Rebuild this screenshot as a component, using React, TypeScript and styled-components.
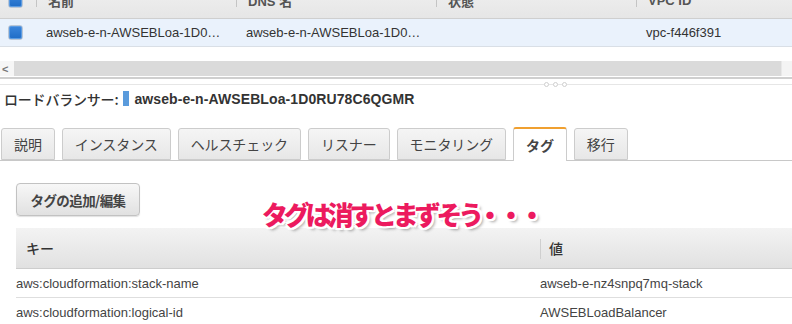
import React from "react";
import styled, { createGlobalStyle } from "styled-components";

const GlobalStyle = createGlobalStyle`
  html, body { margin: 0; padding: 0; background: #fff; }
  body {
    font-family: "Liberation Sans", Arial, "Noto Sans CJK JP", sans-serif;
    color: #444;
    overflow: hidden;
  }
`;

const Page = styled.div`
  position: relative;
  width: 792px;
  height: 324px;
  overflow: hidden;
  background: #fff;
`;

const ListArea = styled.div`
  display: flex;
  flex-direction: column;
`;

const HeadRow = styled.div`
  display: grid;
  grid-template-columns: 36px 200px 200px 200px 156px;
  height: 35px;
  margin-top: -17px;
  background: linear-gradient(#f1f1f1, #e6e6e6);
  border-bottom: 1px solid #cfcfcf;
`;

const HeadCell = styled.div<{ $sep?: boolean }>`
  position: relative;
  display: flex;
  align-items: center;
  padding-left: 12px;
  font-size: 13px;
  font-weight: bold;
  color: #555;
  &::before {
    content: "";
    display: ${(p) => (p.$sep ? "block" : "none")};
    position: absolute;
    left: 0;
    top: 10px;
    height: 14px;
    width: 1px;
    background: #c4c4c4;
  }
`;

const DataRow = styled.div`
  display: grid;
  grid-template-columns: 36px 200px 200px 200px 156px;
  height: 27px;
  background: #eaf2fc;
  border-bottom: 1px solid #d9dfe6;
`;

const DataCell = styled.div`
  display: flex;
  align-items: center;
  padding-left: 10px;
  font-size: 13px;
  color: #333;
  white-space: nowrap;
`;

const CheckCell = styled.div`
  display: flex;
  align-items: center;
  padding-left: 8px;
`;

const CheckBox = styled.span`
  display: block;
  width: 13px;
  height: 13px;
  border-radius: 3px;
  background: linear-gradient(#3b86dc, #1f6cc6);
  border: 1px solid #b9c6d6;
  box-shadow: inset 0 0 0 1px #5b9be2;
`;

const ScrollBar = styled.div`
  display: flex;
  align-items: stretch;
  height: 15px;
  margin-top: 14px;
  border-bottom: 2px solid #cfcfcf;
  padding-bottom: 1px;
`;

const ScrollArrow = styled.div`
  width: 14px;
  display: flex;
  align-items: center;
  justify-content: flex-start;
  padding-left: 2px;
  box-sizing: border-box;
  color: #777;
  font-size: 11px;
  font-weight: bold;
  background: #f6f6f6;
`;

const ScrollTrack = styled.div`
  flex: 1;
  background: #dadada;
  border-right: 1px solid #e8e8e8;
`;

const ScrollEnd = styled.div`
  width: 10px;
  background: #f4f4f4;
`;

const Splitter = styled.div`
  position: relative;
  height: 1px;
  margin-top: 5px;
  background: #e6e6e6;
`;

const SplitDots = styled.div`
  position: absolute;
  left: 544px;
  top: -2px;
  display: flex;
  gap: 4px;
  span {
    display: block;
    width: 3px;
    height: 3px;
    border-radius: 50%;
    border: 1px solid #cfcfcf;
    background: #fff;
  }
`;

const TitleBar = styled.div`
  display: flex;
  align-items: center;
  height: 17px;
  margin-top: 5px;
  padding-left: 4px;
  font-weight: bold;
  font-size: 14px;
  color: #333;
`;

const TitleLabel = styled.span`
  font-family: "Noto Sans CJK JP", sans-serif;
  font-weight: 500;
  font-size: 14px;
  letter-spacing: -0.2px;
`;

const TitleName = styled.span`
  letter-spacing: 0.1px;
`;

const BlueMark = styled.span`
  display: inline-block;
  width: 6px;
  height: 15px;
  margin: 0 5px 0 5px;
  background: #5a9bdc;
`;

const TabBar = styled.div`
  display: flex;
  align-items: flex-end;
  gap: 7px;
  height: 33px;
  margin-top: 20px;
  padding-left: 1px;
  border-bottom: 1px solid #c8c8c8;
`;

const Tab = styled.div<{ $active?: boolean }>`
  display: flex;
  align-items: center;
  justify-content: center;
  box-sizing: border-box;
  height: ${(p) => (p.$active ? "34px" : "32px")};
  padding: 0 12px;
  margin-bottom: ${(p) => (p.$active ? "-1px" : "0")};
  font-family: "Noto Sans CJK JP", sans-serif;
  font-size: 14px;
  letter-spacing: -0.1px;
  font-weight: ${(p) => (p.$active ? 700 : 400)};
  color: #444;
  background: ${(p) => (p.$active ? "#fff" : "linear-gradient(#f5f5f5, #e7e7e7)")};
  border: 1px solid #cccccc;
  border-top: ${(p) => (p.$active ? "2px solid #f0a030" : "1px solid #cccccc")};
  border-bottom: ${(p) => (p.$active ? "none" : "1px solid #cccccc")};
  border-radius: 3px 3px 0 0;
`;

const Content = styled.div`
  padding: 22px 0 0 16px;
  display: flex;
  flex-direction: column;
`;

const ActionButton = styled.button`
  align-self: flex-start;
  box-sizing: border-box;
  width: 124px;
  height: 33px;
  padding: 0;
  font-family: "Noto Sans CJK JP", sans-serif;
  font-weight: 700;
  font-size: 13.5px;
  letter-spacing: -0.6px;
  color: #444;
  background: linear-gradient(#f7f7f7, #e1e1e1);
  border: 1px solid #c2c2c2;
  border-radius: 4px;
  box-shadow: 0 1px 1px rgba(0, 0, 0, 0.12);
`;

const TagTable = styled.div`
  margin-top: 12px;
  display: flex;
  flex-direction: column;
`;

const TagHead = styled.div`
  display: grid;
  grid-template-columns: 524px 1fr;
  height: 40px;
  background: linear-gradient(#f3f3f3, #e1e1e1);
  border-bottom: 1px solid #cdcdcd;
`;

const TagHeadCell = styled.div<{ $sep?: boolean }>`
  position: relative;
  display: flex;
  align-items: center;
  padding-left: ${(p) => (p.$sep ? "9px" : "10px")};
  font-family: "Noto Sans CJK JP", sans-serif;
  font-size: 14px;
  font-weight: 500;
  color: #333;
  &::before {
    content: "";
    display: ${(p) => (p.$sep ? "block" : "none")};
    position: absolute;
    left: 0;
    top: 11px;
    width: 1px;
    height: 20px;
    background: #cfcfcf;
  }
`;

const TagRow = styled.div`
  display: grid;
  grid-template-columns: 524px 1fr;
  height: 28px;
  border-bottom: 1px solid #dedede;
`;

const TagCell = styled.div`
  display: flex;
  align-items: center;
  font-size: 13px;
  color: #444;
  white-space: nowrap;
`;

const Annotation = styled.div`
  position: absolute;
  left: 262px;
  top: 195px;
  font-family: "Noto Sans CJK JP", sans-serif;
  font-weight: 900;
  font-size: 26px;
  letter-spacing: -4.2px;
  color: #ec1a5e;
  white-space: nowrap;
  text-shadow:
    -2px 0 0 #fff, 2px 0 0 #fff, 0 -2px 0 #fff, 0 2px 0 #fff,
    -2px -2px 0 #fff, 2px 2px 0 #fff, -2px 2px 0 #fff, 2px -2px 0 #fff,
    3px 3px 3px rgba(0, 0, 0, 0.35);
`;

const Dots = styled.span`
  letter-spacing: -5px;
  margin-left: -3px;
`;

const headers = ["名前", "DNS 名", "状態", "VPC ID"];

const tags = [
  { key: "aws:cloudformation:stack-name", value: "awseb-e-nz4snpq7mq-stack" },
  { key: "aws:cloudformation:logical-id", value: "AWSEBLoadBalancer" },
];

const tabs = ["説明", "インスタンス", "ヘルスチェック", "リスナー", "モニタリング", "タグ", "移行"];

export default function App() {
  return (
    <Page>
      <GlobalStyle />
      <ListArea>
        <HeadRow>
          <CheckCell>
            <CheckBox />
          </CheckCell>
          {headers.map((h) => (
            <HeadCell key={h} $sep>
              {h}
            </HeadCell>
          ))}
        </HeadRow>
        <DataRow>
          <CheckCell>
            <CheckBox />
          </CheckCell>
          <DataCell>awseb-e-n-AWSEBLoa-1D0…</DataCell>
          <DataCell>awseb-e-n-AWSEBLoa-1D0…</DataCell>
          <DataCell />
          <DataCell>vpc-f446f391</DataCell>
        </DataRow>
        <ScrollBar>
          <ScrollArrow>&lt;</ScrollArrow>
          <ScrollTrack />
          <ScrollEnd />
        </ScrollBar>
        <Splitter>
          <SplitDots>
            <span />
            <span />
            <span />
          </SplitDots>
        </Splitter>
      </ListArea>

      <TitleBar>
        <TitleLabel>ロードバランサー:</TitleLabel>
        <BlueMark />
        <TitleName>awseb-e-n-AWSEBLoa-1D0RU78C6QGMR</TitleName>
      </TitleBar>

      <TabBar>
        {tabs.map((t) => (
          <Tab key={t} $active={t === "タグ"}>
            {t}
          </Tab>
        ))}
      </TabBar>

      <Content>
        <ActionButton>タグの追加/編集</ActionButton>
        <TagTable>
          <TagHead>
            <TagHeadCell>キー</TagHeadCell>
            <TagHeadCell $sep>値</TagHeadCell>
          </TagHead>
          {tags.map((t) => (
            <TagRow key={t.key}>
              <TagCell>{t.key}</TagCell>
              <TagCell>{t.value}</TagCell>
            </TagRow>
          ))}
        </TagTable>
      </Content>

      <Annotation>
        タグは消すとまずそう<Dots>・・・</Dots>
      </Annotation>
    </Page>
  );
}
